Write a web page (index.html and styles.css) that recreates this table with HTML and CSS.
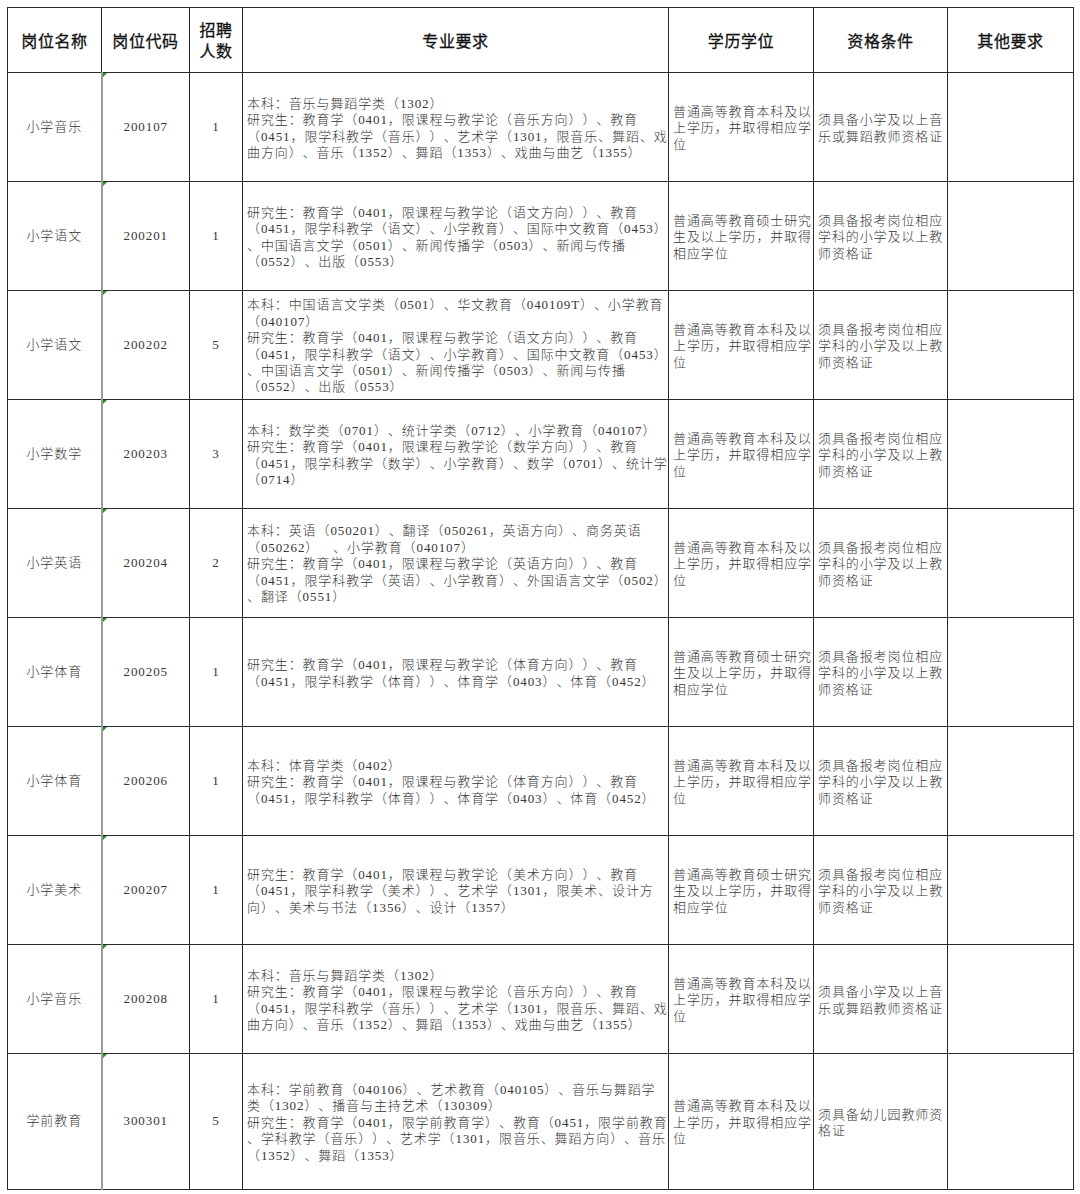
FILE: index.html
```html
<!DOCTYPE html>
<html lang="zh-CN">
<head>
<meta charset="utf-8">
<title>岗位表</title>
<link rel="stylesheet" href="styles.css">
</head>
<body>
<table class="jobs">
  <colgroup>
    <col class="c-name">
    <col class="c-code">
    <col class="c-num">
    <col class="c-major">
    <col class="c-edu">
    <col class="c-qual">
    <col class="c-other">
  </colgroup>
  <thead>
    <tr class="head-row">
      <th>岗位名称</th>
      <th>岗位代码</th>
      <th class="th-num">招聘<br>人数</th>
      <th>专业要求</th>
      <th>学历学位</th>
      <th>资格条件</th>
      <th>其他要求</th>
    </tr>
  </thead>
  <tbody>
    <tr class="row">
      <td class="ctr">小学音乐</td>
      <td class="ctr code">200107</td>
      <td class="ctr">1</td>
      <td class="txt">本科：音乐与舞蹈学类（1302）<br>研究生：教育学（0401，限课程与教学论（音乐方向））、教育<br>（0451，限学科教学（音乐））、艺术学（1301，限音乐、舞蹈、戏<br>曲方向）、音乐（1352）、舞蹈（1353）、戏曲与曲艺（1355）</td>
      <td class="txt">普通高等教育本科及以<br>上学历，并取得相应学<br>位</td>
      <td class="txt">须具备小学及以上音<br>乐或舞蹈教师资格证</td>
      <td></td>
    </tr>
    <tr class="row">
      <td class="ctr">小学语文</td>
      <td class="ctr code">200201</td>
      <td class="ctr">1</td>
      <td class="txt">研究生：教育学（0401，限课程与教学论（语文方向））、教育<br>（0451，限学科教学（语文）、小学教育）、国际中文教育（0453）<br>、中国语言文学（0501）、新闻传播学（0503）、新闻与传播<br>（0552）、出版（0553）</td>
      <td class="txt">普通高等教育硕士研究<br>生及以上学历，并取得<br>相应学位</td>
      <td class="txt">须具备报考岗位相应<br>学科的小学及以上教<br>师资格证</td>
      <td></td>
    </tr>
    <tr class="row">
      <td class="ctr">小学语文</td>
      <td class="ctr code">200202</td>
      <td class="ctr">5</td>
      <td class="txt">本科：中国语言文学类（0501）、华文教育（040109T）、小学教育<br>（040107）<br>研究生：教育学（0401，限课程与教学论（语文方向））、教育<br>（0451，限学科教学（语文）、小学教育）、国际中文教育（0453）<br>、中国语言文学（0501）、新闻传播学（0503）、新闻与传播<br>（0552）、出版（0553）</td>
      <td class="txt">普通高等教育本科及以<br>上学历，并取得相应学<br>位</td>
      <td class="txt">须具备报考岗位相应<br>学科的小学及以上教<br>师资格证</td>
      <td></td>
    </tr>
    <tr class="row">
      <td class="ctr">小学数学</td>
      <td class="ctr code">200203</td>
      <td class="ctr">3</td>
      <td class="txt">本科：数学类（0701）、统计学类（0712）、小学教育（040107）<br>研究生：教育学（0401，限课程与教学论（数学方向））、教育<br>（0451，限学科教学（数学）、小学教育）、数学（0701）、统计学<br>（0714）</td>
      <td class="txt">普通高等教育本科及以<br>上学历，并取得相应学<br>位</td>
      <td class="txt">须具备报考岗位相应<br>学科的小学及以上教<br>师资格证</td>
      <td></td>
    </tr>
    <tr class="row">
      <td class="ctr">小学英语</td>
      <td class="ctr code">200204</td>
      <td class="ctr">2</td>
      <td class="txt">本科：英语（050201）、翻译（050261，英语方向）、商务英语<br>（050262）　、小学教育（040107）<br>研究生：教育学（0401，限课程与教学论（英语方向））、教育<br>（0451，限学科教学（英语）、小学教育）、外国语言文学（0502）<br>、翻译（0551）</td>
      <td class="txt">普通高等教育本科及以<br>上学历，并取得相应学<br>位</td>
      <td class="txt">须具备报考岗位相应<br>学科的小学及以上教<br>师资格证</td>
      <td></td>
    </tr>
    <tr class="row">
      <td class="ctr">小学体育</td>
      <td class="ctr code">200205</td>
      <td class="ctr">1</td>
      <td class="txt">研究生：教育学（0401，限课程与教学论（体育方向））、教育<br>（0451，限学科教学（体育））、体育学（0403）、体育（0452）</td>
      <td class="txt">普通高等教育硕士研究<br>生及以上学历，并取得<br>相应学位</td>
      <td class="txt">须具备报考岗位相应<br>学科的小学及以上教<br>师资格证</td>
      <td></td>
    </tr>
    <tr class="row">
      <td class="ctr">小学体育</td>
      <td class="ctr code">200206</td>
      <td class="ctr">1</td>
      <td class="txt">本科：体育学类（0402）<br>研究生：教育学（0401，限课程与教学论（体育方向））、教育<br>（0451，限学科教学（体育））、体育学（0403）、体育（0452）</td>
      <td class="txt">普通高等教育本科及以<br>上学历，并取得相应学<br>位</td>
      <td class="txt">须具备报考岗位相应<br>学科的小学及以上教<br>师资格证</td>
      <td></td>
    </tr>
    <tr class="row">
      <td class="ctr">小学美术</td>
      <td class="ctr code">200207</td>
      <td class="ctr">1</td>
      <td class="txt">研究生：教育学（0401，限课程与教学论（美术方向））、教育<br>（0451，限学科教学（美术））、艺术学（1301，限美术、设计方<br>向）、美术与书法（1356）、设计（1357）</td>
      <td class="txt">普通高等教育硕士研究<br>生及以上学历，并取得<br>相应学位</td>
      <td class="txt">须具备报考岗位相应<br>学科的小学及以上教<br>师资格证</td>
      <td></td>
    </tr>
    <tr class="row">
      <td class="ctr">小学音乐</td>
      <td class="ctr code">200208</td>
      <td class="ctr">1</td>
      <td class="txt">本科：音乐与舞蹈学类（1302）<br>研究生：教育学（0401，限课程与教学论（音乐方向））、教育<br>（0451，限学科教学（音乐））、艺术学（1301，限音乐、舞蹈、戏<br>曲方向）、音乐（1352）、舞蹈（1353）、戏曲与曲艺（1355）</td>
      <td class="txt">普通高等教育本科及以<br>上学历，并取得相应学<br>位</td>
      <td class="txt">须具备小学及以上音<br>乐或舞蹈教师资格证</td>
      <td></td>
    </tr>
    <tr class="row row-tall">
      <td class="ctr">学前教育</td>
      <td class="ctr code">300301</td>
      <td class="ctr">5</td>
      <td class="txt">本科：学前教育（040106）、艺术教育（040105）、音乐与舞蹈学<br>类（1302）、播音与主持艺术（130309）<br>研究生：教育学（0401，限学前教育学）、教育（0451，限学前教育<br>、学科教学（音乐））、艺术学（1301，限音乐、舞蹈方向）、音乐<br>（1352）、舞蹈（1353）</td>
      <td class="txt">普通高等教育本科及以<br>上学历，并取得相应学<br>位</td>
      <td class="txt">须具备幼儿园教师资<br>格证</td>
      <td></td>
    </tr>
  </tbody>
</table>
</body>
</html>
```

FILE: styles.css
```css
html, body {
  margin: 0;
  padding: 0;
  background: #ffffff;
}

body {
  padding: 7px 0 0 7px;
}

.jobs {
  border-collapse: collapse;
  table-layout: fixed;
  width: 1066px;
  font-family: "Liberation Serif", "Noto Sans CJK SC", serif;
  color: #363636;
  text-spacing-trim: space-all;
  font-kerning: none;
}

.c-name { width: 94px; }
.c-code { width: 88px; }
.c-num { width: 53px; }
.c-major { width: 426px; }
.c-edu { width: 145px; }
.c-qual { width: 134px; }
.c-other { width: 126px; }

.jobs th,
.jobs td {
  border: 1px solid #2a2a2a;
  padding: 0;
  vertical-align: middle;
}

.head-row th {
  height: 64px;
  font-family: "Noto Sans CJK SC", sans-serif;
  font-weight: 400;
  font-size: 16px;
  letter-spacing: 0.6px;
  line-height: 21px;
  color: #111111;
  text-align: center;
  -webkit-text-stroke: 0.3px #111111;
}

.row td {
  height: 108px;
  font-size: 13px;
  font-weight: 300;
  letter-spacing: 0.9px;
  line-height: 16.4px;
}

.row-tall td {
  height: 135px;
}

.jobs td.ctr {
  text-align: center;
}

.jobs td.txt {
  text-align: left;
  white-space: nowrap;
  padding: 3px 0 0 4px;
  height: 105px;
}

.jobs .row-tall td.txt {
  height: 132px;
}

.row td.code {
  position: relative;
  border-left: 2px solid #9a9a9a;
}

.row td.code::before {
  content: "";
  position: absolute;
  left: 0;
  top: 0;
  width: 0;
  height: 0;
  border-top: 4px solid #1f8a2a;
  border-right: 4px solid transparent;
}
```
